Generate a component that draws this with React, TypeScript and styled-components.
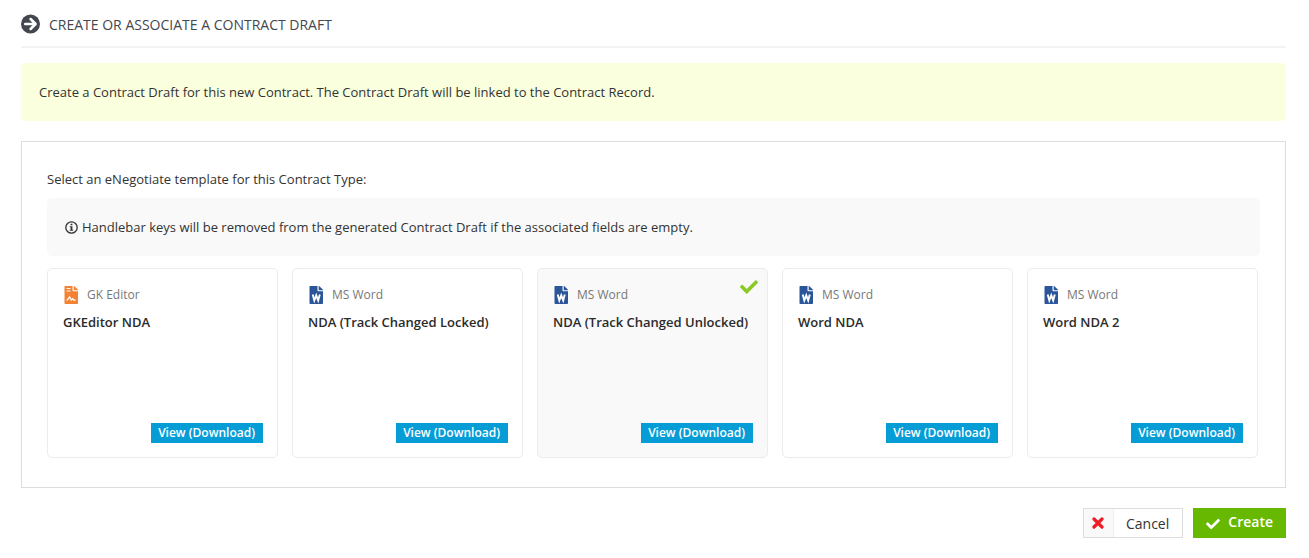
import React, { useState } from 'react';
import styled, { createGlobalStyle } from 'styled-components';

const GlobalStyle = createGlobalStyle`
  * { box-sizing: border-box; }
  body {
    margin: 0;
    background: #fff;
    color: #333;
    font-family: 'Open Sans', 'Noto Sans', sans-serif;
    font-size: 13px;
    line-height: 18px;
  }
`;

const Page = styled.main`
  padding: 12px 23px 20px 21px;
`;

const Header = styled.header`
  display: flex;
  align-items: center;
  gap: 9px;
  height: 36px;
  padding-bottom: 10px;
  border-bottom: 2px solid #f3f3f3;
  color: #444750;
`;

const Heading = styled.h1`
  margin: 2px 0 0;
  font-size: 14px;
  font-weight: 400;
  line-height: 20px;
  text-transform: uppercase;
`;

const Notice = styled.p<{ $tone: 'info' | 'muted' }>`
  display: flex;
  align-items: center;
  gap: 4px;
  margin: 0;
  padding: 20px 18px;
  border-radius: 5px;
  background: ${({ $tone }) => ($tone === 'info' ? '#faffde' : '#f9f9f9')};
`;

const Banner = styled.div`
  margin: 15px 0 20px;
`;

const Panel = styled.fieldset`
  min-width: 0;
  margin: 0;
  padding: 28px 25px 29px;
  border: 1px solid #ddd;
`;

const Prompt = styled.legend`
  float: left;
  width: 100%;
  margin-bottom: 10px;
  padding: 0;
`;

const PanelBody = styled.div`
  clear: both;
`;

const Templates = styled.div`
  display: grid;
  grid-template-columns: repeat(auto-fill, 231px);
  gap: 14px;
  margin-top: 12px;
`;

const Card = styled.div<{ $selected: boolean }>`
  position: relative;
  display: flex;
  flex-direction: column;
  justify-content: space-between;
  min-height: 190px;
  padding: 16px 14px 14px 15px;
  border: 1px solid #ececec;
  border-radius: 5px;
  background: ${({ $selected }) => ($selected ? '#f9f9f9' : '#fff')};
`;

const HiddenRadio = styled.input`
  position: absolute;
  opacity: 0;
  pointer-events: none;
`;

const CardLabel = styled.label`
  display: flex;
  flex-direction: column;
  gap: 8px;
  cursor: pointer;
`;

const Kind = styled.span`
  display: flex;
  align-items: center;
  gap: 8px;
  height: 20px;
  color: #777;
  font-size: 12px;
`;

const Name = styled.span`
  color: #2b2b2b;
  font-weight: 600;
`;

const Selected = styled.span`
  position: absolute;
  top: 9px;
  right: 9px;
  display: flex;
`;

const ViewLink = styled.a`
  align-self: flex-end;
  padding: 1px 8px 1px 7px;
  background: #069dd7;
  color: #fff;
  font-size: 12px;
  font-weight: 600;
  line-height: 18px;
  text-decoration: none;
`;

const Actions = styled.footer`
  display: flex;
  justify-content: flex-end;
  gap: 10px;
  margin-top: 20px;
`;

const Button = styled.button`
  display: flex;
  align-items: center;
  height: 30px;
  padding: 0;
  font-family: inherit;
  font-size: 14px;
  line-height: 20px;
  cursor: pointer;
`;

const CancelButton = styled(Button)`
  border: 1px solid #ddd;
  background: #fff;
  color: #333;
`;

const CancelIcon = styled.span`
  display: flex;
  align-items: center;
  justify-content: center;
  width: 30px;
  height: 28px;
  border-right: 1px solid #eee;
  background: #f9f9f9;
`;

const CancelText = styled.span`
  padding: 2px 13px 0 12px;
`;

const CreateButton = styled(Button)`
  gap: 8px;
  padding: 0 13px;
  border: 0;
  background: #67b800;
  color: #fff;
  font-weight: 600;

  svg {
    margin-top: 2px;
  }
`;

const CreateText = styled.span`
  padding-bottom: 2px;
`;

const CHECK =
  'M173.898 439.404l-166.4-166.4c-9.997-9.997-9.997-26.206 0-36.204l36.203-36.204c9.997-9.998 26.207-9.998 36.204 0L192 312.69 432.095 72.596c9.997-9.997 26.207-9.997 36.204 0l36.203 36.204c9.997 9.997 9.997 26.206 0 36.204l-294.4 294.401c-9.998 9.997-26.207 9.997-36.204-.001z';

const CheckIcon = ({ size, color }: { size: number; color: string }) => (
  <svg width={size} height={size} viewBox="0 0 512 512" aria-hidden="true">
    <path d={CHECK} fill={color} />
  </svg>
);

const ArrowIcon = () => (
  <svg width="19" height="20" viewBox="0 0 19 20" aria-hidden="true">
    <circle cx="9.5" cy="10" r="9.5" fill="#444750" />
    <path
      d="M4.2 10H14M9.6 5L14.6 10L9.6 15"
      fill="none"
      stroke="#fff"
      strokeWidth="2.5"
      strokeLinecap="round"
      strokeLinejoin="round"
    />
  </svg>
);

const InfoIcon = () => (
  <svg width="13" height="13" viewBox="0 0 13 13" aria-hidden="true">
    <circle cx="6.5" cy="6.5" r="5.7" fill="none" stroke="#333" strokeWidth="1.3" />
    <path d="M5.6 2.7h1.8v1.6H5.6zM4.8 5.2h2.6v3.6h.8v1H4.8v-1h.8V6.2h-.8z" fill="#333" />
  </svg>
);

const CrossIcon = () => (
  <svg width="12" height="12" viewBox="0 0 12 12" aria-hidden="true">
    <path d="M2 2L10 10M10 2L2 10" stroke="#ee1c25" strokeWidth="3.2" strokeLinecap="round" />
  </svg>
);

const Sheet = ({ color }: { color: string }) => (
  <>
    <path
      d="M2.500 1H9.500V5.500a.8.8 0 0 0 .8.8H15V18.200a.8.8 0 0 1-.8.8H2.300a.8.8 0 0 1-.8-.8V1.800a.8.8 0 0 1 .8-.8z"
      fill={color}
    />
    <path d="M10.700 1H11.200L15 4.700V5.200H10.700z" fill={color} />
  </>
);

const WordIcon = () => (
  <svg width="16" height="20" viewBox="0 0 16 20" aria-hidden="true">
    <Sheet color="#2a5699" />
    <path
      d="M4.700 9.500L6.300 15.500L8.250 10.300L10.200 15.500L11.800 9.500"
      fill="none"
      stroke="#fff"
      strokeWidth="1.9"
    />
  </svg>
);

const EditorIcon = () => (
  <svg width="16" height="20" viewBox="0 0 16 20" aria-hidden="true">
    <Sheet color="#f58233" />
    <path d="M3.600 3.500H7.500M3.600 6H7.500" stroke="#fff" strokeWidth="1.2" />
    <path d="M3.800 15.700L6.600 12L8.300 15L9.700 13.800L10.700 15.200H12.700" fill="none" stroke="#fff" strokeWidth="1.3" />
  </svg>
);

type Template = { id: string; name: string; kind: 'GK Editor' | 'MS Word' };

const TEMPLATES: Template[] = [
  { id: 'gk-nda', name: 'GKEditor NDA', kind: 'GK Editor' },
  { id: 'nda-locked', name: 'NDA (Track Changed Locked)', kind: 'MS Word' },
  { id: 'nda-unlocked', name: 'NDA (Track Changed Unlocked)', kind: 'MS Word' },
  { id: 'word-nda', name: 'Word NDA', kind: 'MS Word' },
  { id: 'word-nda-2', name: 'Word NDA 2', kind: 'MS Word' },
];

export default function App() {
  const [selected, setSelected] = useState('nda-unlocked');

  return (
    <>
      <GlobalStyle />
      <Page>
        <Header>
          <ArrowIcon />
          <Heading>Create or associate a contract draft</Heading>
        </Header>
        <Banner>
          <Notice $tone="info">
            Create a Contract Draft for this new Contract. The Contract Draft will be linked to the Contract Record.
          </Notice>
        </Banner>
        <Panel>
          <Prompt>Select an eNegotiate template for this Contract Type:</Prompt>
          <PanelBody>
            <Notice $tone="muted">
              <InfoIcon />
              Handlebar keys will be removed from the generated Contract Draft if the associated fields are empty.
            </Notice>
            <Templates>
              {TEMPLATES.map(({ id, name, kind }) => (
                <Card key={id} $selected={id === selected}>
                  <HiddenRadio
                    type="radio"
                    name="template"
                    id={id}
                    checked={id === selected}
                    onChange={() => setSelected(id)}
                  />
                  <CardLabel htmlFor={id}>
                    <Kind>
                      {kind === 'MS Word' ? <WordIcon /> : <EditorIcon />}
                      {kind}
                    </Kind>
                    <Name>{name}</Name>
                  </CardLabel>
                  {id === selected && (
                    <Selected>
                      <CheckIcon size={18} color="#8dc926" />
                    </Selected>
                  )}
                  <ViewLink href={`#${id}`}>View (Download)</ViewLink>
                </Card>
              ))}
            </Templates>
          </PanelBody>
        </Panel>
        <Actions>
          <CancelButton type="button">
            <CancelIcon>
              <CrossIcon />
            </CancelIcon>
            <CancelText>Cancel</CancelText>
          </CancelButton>
          <CreateButton type="button">
            <CheckIcon size={14} color="#fff" />
            <CreateText>Create</CreateText>
          </CreateButton>
        </Actions>
      </Page>
    </>
  );
}
